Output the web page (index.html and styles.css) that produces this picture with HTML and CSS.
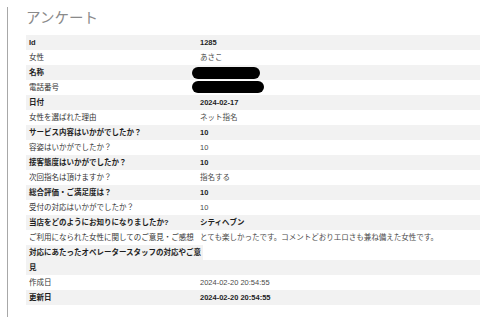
FILE: index.html
```html
<!DOCTYPE html>
<html lang="ja">
<head>
<meta charset="utf-8">
<title>アンケート</title>
<link rel="stylesheet" href="styles.css">
</head>
<body>
<div class="panel">
  <h1 class="title">アンケート</h1>
  <table class="survey">
    <tr><th>Id</th><td>1285</td></tr>
    <tr><th>女性</th><td>あさこ</td></tr>
    <tr><th>名称</th><td><span class="redact redact-a"></span></td></tr>
    <tr><th>電話番号</th><td><span class="redact redact-b"></span></td></tr>
    <tr><th>日付</th><td>2024-02-17</td></tr>
    <tr><th>女性を選ばれた理由</th><td>ネット指名</td></tr>
    <tr><th>サービス内容はいかがでしたか？</th><td>10</td></tr>
    <tr><th>容姿はいかがでしたか？</th><td>10</td></tr>
    <tr><th>接客態度はいかがでしたか？</th><td>10</td></tr>
    <tr><th>次回指名は頂けますか？</th><td>指名する</td></tr>
    <tr><th>総合評価・ご満足度は？</th><td>10</td></tr>
    <tr><th>受付の対応はいかがでしたか？</th><td>10</td></tr>
    <tr><th>当店をどのようにお知りになりましたか?</th><td>シティヘブン</td></tr>
    <tr><th>ご利用になられた女性に関してのご意見・ご感想</th><td>とても楽しかったです。コメントどおりエロさも兼ね備えた女性です。</td></tr>
    <tr class="split"><th><div class="long">対応にあたったオペレータースタッフの対応やご意見</div></th><td></td></tr>
    <tr><th>作成日</th><td>2024-02-20 20:54:55</td></tr>
    <tr><th>更新日</th><td>2024-02-20 20:54:55</td></tr>
  </table>
</div>
</body>
</html>
```
FILE: styles.css
```css
html, body {
  margin: 0;
  padding: 0;
  background: #fff;
  overflow: hidden;
}

body {
  font-family: "Liberation Sans", "Noto Sans CJK JP", sans-serif;
  width: 480px;
  height: 332px;
}

.panel {
  margin: 3px 0 0 7px;
  height: 310px;
  border-left: 1px solid #a8a8a8;
  padding-left: 18px;
  box-sizing: border-box;
}

.title {
  margin: 7px 0 8px;
  font-size: 14.5px;
  line-height: 20px;
  font-weight: normal;
  color: #8a8a8a;
  font-family: "Noto Sans CJK JP", "Liberation Sans", sans-serif;
}

.survey {
  width: 100%;
  border-collapse: collapse;
  border-spacing: 0;
  font-size: 7.5px;
  line-height: 15px;
}

.survey th,
.survey td {
  padding: 0;
  text-align: left;
  vertical-align: top;
  white-space: nowrap;
}

.survey th {
  width: 168px;
  padding-left: 3px;
  color: #333;
  font-weight: normal;
}

.survey td {
  padding-left: 3px;
  color: #4a4a4a;
}

.survey tr:nth-child(odd) {
  background: #f2f2f2;
}

.survey tr:nth-child(odd) th,
.survey tr:nth-child(odd) td {
  font-weight: bold;
  color: #1e1e1e;
}

.survey tr.split {
  background: none;
}

.survey tr.split th {
  white-space: normal;
  background: #f2f2f2;
}

.survey tr.split td {
  background: linear-gradient(transparent 50%, #f2f2f2 50%);
}

.long {
  margin-right: -6px;
  background: #f2f2f2;
}

.redact {
  display: inline-block;
  height: 12px;
  border-radius: 6px;
  background: #000;
  vertical-align: top;
  margin-top: 2px;
  margin-left: -8px;
}

.redact-a {
  width: 68px;
}

.redact-b {
  width: 72px;
  margin-top: 1px;
}
```
